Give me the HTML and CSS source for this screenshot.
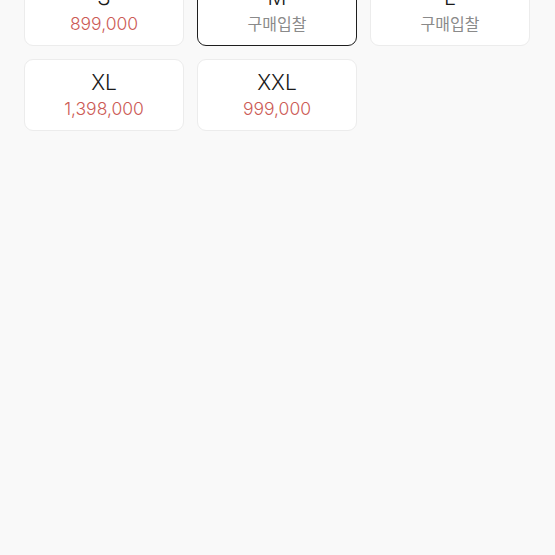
FILE: index.html
```html
<!DOCTYPE html>
<html lang="ko">
<head>
    <meta charset="UTF-8">
    <meta name="viewport" content="width=device-width, initial-scale=1.0">
    <title>사이즈 선택</title>
    <link rel="stylesheet" href="styles.css">
</head>
<body>
    <div class="size-grid">
        <button class="size-card">
            <span class="size">S</span>
            <span class="price">899,000</span>
        </button>
        <button class="size-card selected">
            <span class="size">M</span>
            <span class="price empty">구매입찰</span>
        </button>
        <button class="size-card">
            <span class="size">L</span>
            <span class="price empty">구매입찰</span>
        </button>
        <button class="size-card">
            <span class="size">XL</span>
            <span class="price">1,398,000</span>
        </button>
        <button class="size-card">
            <span class="size">XXL</span>
            <span class="price">999,000</span>
        </button>
    </div>
</body>
</html>
```

FILE: styles.css
```css
html, body {
    height: 100%;
}
body {
    font-family: Inter, 'Noto Sans', 'Noto Sans CJK KR', sans-serif;
    background-color: #f9f9f9;
    margin: 0;
    overflow: hidden;
}
.size-grid {
    display: grid;
    grid-template-columns: repeat(3, 160px);
    grid-auto-rows: 72px;
    column-gap: 13px;
    row-gap: 13px;
    padding: 0 24px;
    margin-top: -26px;
}
.size-card {
    display: flex;
    flex-direction: column;
    align-items: center;
    justify-content: center;
    background: #fff;
    border: 1px solid #ececec;
    border-radius: 9px;
    padding: 3px 0 0;
    font-family: inherit;
    cursor: pointer;
}
.size-card.selected {
    border: 1.5px solid #1e1e1e;
}
.size {
    font-size: 21px;
    font-weight: 300;
    line-height: 24px;
    color: #1a1a1a;
}
.price {
    font-size: 17.5px;
    font-weight: 300;
    line-height: 27px;
    color: #cc5a55;
}
.price.empty {
    color: #8a8a8a;
    font-family: 'Noto Sans CJK KR', sans-serif;
    font-size: 16px;
    font-weight: 400;
}
```
